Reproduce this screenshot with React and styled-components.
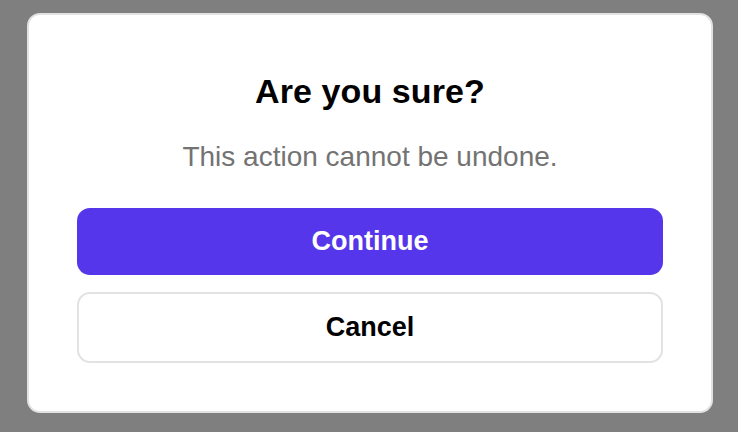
import React from "react";
import styled, { createGlobalStyle } from "styled-components";

const GlobalStyle = createGlobalStyle`
	html, body {
		margin: 0;
		padding: 0;
		height: 100%;
		background: #7f7f7f;
		font-family: "Liberation Sans", Arial, sans-serif;
	}
	#root {
		height: 100%;
	}
`;

const Overlay = styled.div`
	box-sizing: border-box;
	height: 100%;
	display: flex;
	justify-content: center;
	align-items: flex-start;
	padding: 13px 0 0 2px;
`;

const Dialog = styled.div`
	box-sizing: border-box;
	width: 686px;
	height: 400px;
	background: #ffffff;
	border: 2px solid #e2e2e2;
	border-radius: 13px;
	padding: 56px 48px 48px;
	display: flex;
	flex-direction: column;
	align-items: stretch;
`;

const Title = styled.h2`
	margin: 0;
	text-align: center;
	font-size: 34px;
	line-height: 40px;
	font-weight: 700;
	color: #000;
	letter-spacing: 0.1px;
`;

const Message = styled.p`
	margin: 29px 0 0;
	text-align: center;
	font-size: 28px;
	line-height: 34px;
	color: #737373;
`;

const Actions = styled.div`
	display: flex;
	flex-direction: column;
	gap: 17px;
	margin-top: 34px;
`;

const Button = styled.button`
	box-sizing: border-box;
	height: ${p => (p.$primary ? "67px" : "71px")};
	border-radius: 13px;
	font-family: inherit;
	font-size: 27px;
	font-weight: 700;
	cursor: pointer;
	background: ${p => (p.$primary ? "#5536ea" : "#ffffff")};
	color: ${p => (p.$primary ? "#ffffff" : "#000000")};
	border: ${p => (p.$primary ? "none" : "2px solid #e2e2e2")};
`;

const App = () => (
	<>
		<GlobalStyle />
		<Overlay>
			<Dialog>
				<Title>Are you sure?</Title>
				<Message>This action cannot be undone.</Message>
				<Actions>
					<Button $primary>Continue</Button>
					<Button>Cancel</Button>
				</Actions>
			</Dialog>
		</Overlay>
	</>
);

export default App;
